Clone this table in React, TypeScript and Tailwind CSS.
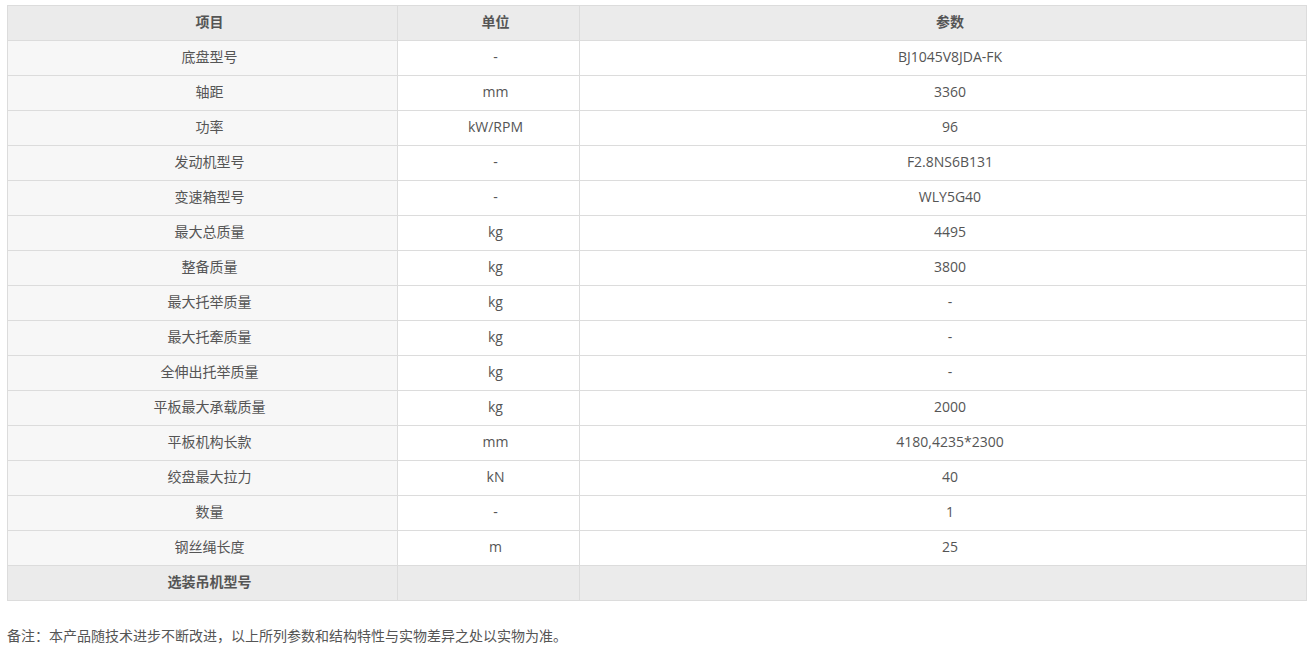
const rows: [string, string, string][] = [
  ["底盘型号", "-", "BJ1045V8JDA-FK"],
  ["轴距", "mm", "3360"],
  ["功率", "kW/RPM", "96"],
  ["发动机型号", "-", "F2.8NS6B131"],
  ["变速箱型号", "-", "WLY5G40"],
  ["最大总质量", "kg", "4495"],
  ["整备质量", "kg", "3800"],
  ["最大托举质量", "kg", "-"],
  ["最大托牽质量", "kg", "-"],
  ["全伸出托举质量", "kg", "-"],
  ["平板最大承载质量", "kg", "2000"],
  ["平板机构长款", "mm", "4180,4235*2300"],
  ["绞盘最大拉力", "kN", "40"],
  ["数量", "-", "1"],
  ["钢丝绳长度", "m", "25"],
];

export default function App() {
  return (
    <div className="min-h-screen bg-white px-[7px] pt-[5px] font-['Open_Sans','Noto_Sans_CJK_SC',sans-serif] text-[14px] text-[#555]">
      <table className="w-[1300px] table-fixed border-collapse border border-[#dcdcdc]">
        <colgroup>
          <col className="w-[390px]" />
          <col className="w-[182px]" />
          <col />
        </colgroup>
        <thead>
          <tr className="h-[35px] bg-[#ebebeb]">
            <th className="border border-[#dcdcdc] pb-[3px] pl-[14px] font-bold text-[#555]">项目</th>
            <th className="border border-[#dcdcdc] pb-[3px] pl-[14px] font-bold text-[#555]">单位</th>
            <th className="border border-[#dcdcdc] pb-[3px] pl-[14px] font-bold text-[#555]">参数</th>
          </tr>
        </thead>
        <tbody>
          {rows.map(([name, unit, value]) => (
            <tr key={name} className="h-[35px] text-center">
              <td className="border border-[#dcdcdc] bg-[#f7f7f7] pb-[3px] pl-[14px]">{name}</td>
              <td className="border border-[#dcdcdc] bg-white pb-[3px] pl-[14px]">{unit}</td>
              <td className="border border-[#dcdcdc] bg-white pb-[3px] pl-[14px]">{value}</td>
            </tr>
          ))}
          <tr className="h-[35px] bg-[#ebebeb] text-center">
            <td className="border border-[#dcdcdc] pb-[3px] pl-[14px] font-bold">选装吊机型号</td>
            <td className="border border-[#dcdcdc]"></td>
            <td className="border border-[#dcdcdc]"></td>
          </tr>
        </tbody>
      </table>
      <p className="mt-[24px] text-[14px] text-[#555]">
        备注：本产品随技术进步不断改进，以上所列参数和结构特性与实物差异之处以实物为准。
      </p>
    </div>
  );
}
